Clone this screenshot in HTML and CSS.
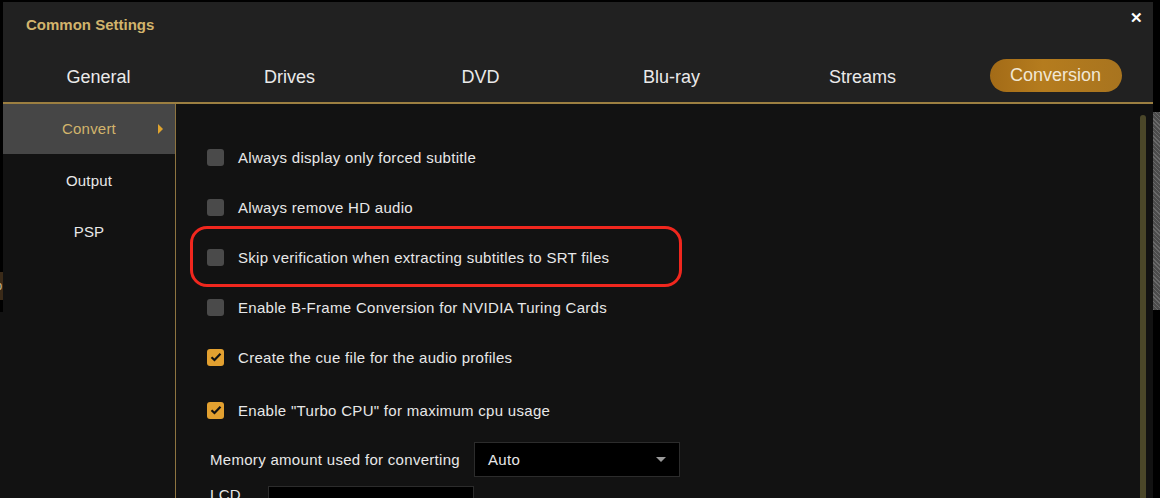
FILE: index.html
```html
<!DOCTYPE html>
<html lang="en">
<head>
    <meta charset="UTF-8">
    <title>Common Settings</title>
    <link rel="stylesheet" href="styles.css">
</head>
<body>
    <div class="edge-left"><span class="behind">p</span></div>

    <div class="dialog">
        <div class="header">
            <div class="titlebar">
                <p class="title">Common Settings</p>
                <span class="close">&#x2715;</span>
            </div>
            <div class="tabs">
                <div class="tab"><span>General</span></div>
                <div class="tab"><span>Drives</span></div>
                <div class="tab"><span>DVD</span></div>
                <div class="tab"><span>Blu-ray</span></div>
                <div class="tab"><span>Streams</span></div>
                <div class="tab"><span class="pill">Conversion</span></div>
            </div>
        </div>

        <div class="body">
            <div class="sidebar">
                <div class="side-item active">Convert<span class="arrow"></span></div>
                <div class="side-item">Output</div>
                <div class="side-item">PSP</div>
            </div>

            <div class="content">
                <div class="option">
                    <span class="check"></span>
                    <span>Always display only forced subtitle</span>
                </div>
                <div class="option">
                    <span class="check"></span>
                    <span>Always remove HD audio</span>
                </div>
                <div class="option">
                    <span class="check"></span>
                    <span>Skip verification when extracting subtitles to SRT files</span>
                </div>
                <div class="option">
                    <span class="check"></span>
                    <span>Enable B-Frame Conversion for NVIDIA Turing Cards</span>
                </div>
                <div class="option">
                    <span class="check on">
                        <svg width="12" height="10" viewBox="0 0 12 10"><path d="M1.5 5.2 L4.5 8 L10.5 1.8" fill="none" stroke="#111" stroke-width="2.2"/></svg>
                    </span>
                    <span>Create the cue file for the audio profiles</span>
                </div>
                <div class="option turbo">
                    <span class="check on">
                        <svg width="12" height="10" viewBox="0 0 12 10"><path d="M1.5 5.2 L4.5 8 L10.5 1.8" fill="none" stroke="#111" stroke-width="2.2"/></svg>
                    </span>
                    <span>Enable "Turbo CPU" for maximum cpu usage</span>
                </div>

                <div class="field">
                    <span class="field-label">Memory amount used for converting</span>
                    <div class="select">
                        <span>Auto</span>
                        <span class="caret"></span>
                    </div>
                </div>
                <div class="field lcd">
                    <span class="field-label short">LCD</span>
                    <div class="input">720</div>
                    <span class="unit">HD</span>
                </div>

                <div class="highlight"></div>
                <div class="scrollbar"></div>
            </div>
        </div>
    </div>

    <div class="edge-right"><div class="noise"></div></div>
</body>
</html>
```

FILE: styles.css
```css
body{
    margin:0;
    background-color:#000;
    font-family:"Liberation Sans", Arial, sans-serif;
    color:#e8e8e8;
    display:flex;
    height:498px;
    overflow:hidden;
}
.edge-left{
    width:3px;
    flex-shrink:0;
    background:linear-gradient(#000 312px, #121212 312px);
    overflow:hidden;
}
.behind{
    display:block;
    margin-top:272px;
    height:28px;
    background-color:#3a2a18;
    color:#c9b48a;
    font-size:13px;
    line-height:28px;
    text-indent:-5px;
}
.edge-right{
    width:7px;
    flex-shrink:0;
}
.noise{
    margin-top:112px;
    height:198px;
    background-color:#5a5a5a;
    background-image:repeating-linear-gradient(45deg, #6a6a6a 0 1px, #4c4c4c 1px 3px);
}

.dialog{
    width:1150px;
    flex-shrink:0;
    display:flex;
    flex-direction:column;
}

/* header */
.header{
    background-color:#212121;
    border-bottom:2px solid #9c7f41;
    margin-top:2px;
}
.titlebar{
    height:47px;
    display:flex;
    align-items:center;
    justify-content:space-between;
    padding:0 10px 0 23px;
}
.title{
    margin:0;
    font-size:15px;
    font-weight:bold;
    color:#d2b46c;
    margin-top:-3px;
}
.close{
    color:#fff;
    font-weight:bold;
    font-size:15px;
    margin-top:-16px;
}
.tabs{
    display:grid;
    grid-template-columns:repeat(6, 191px);
    height:53px;
    align-items:center;
    font-size:18px;
    color:#eaeaea;
}
.tab{
    text-align:center;
    margin-top:4px;
}
.pill{
    display:inline-block;
    width:132px;
    height:33px;
    line-height:33px;
    border-radius:17px;
    background:linear-gradient(90deg, #a36b17 0%, #b57c1e 40%, #a8741f 100%);
    color:#f1e7d4;
    margin-left:4px;
    margin-top:-4px;
}

/* body */
.body{
    flex:1;
    display:flex;
    background-color:#121212;
}
.sidebar{
    width:172px;
    border-right:1px solid #8e7440;
    font-size:15px;
    letter-spacing:0.2px;
}
.side-item{
    height:51px;
    line-height:53px;
    text-align:center;
    position:relative;
}
.side-item.active{
    height:50px;
    line-height:50px;
    background-color:#464646;
    color:#d2b46c;
}
.arrow{
    position:absolute;
    right:12px;
    top:20px;
    border-left:5px solid #e0a42e;
    border-top:5px solid transparent;
    border-bottom:5px solid transparent;
}

.content{
    flex:1;
    position:relative;
    padding:28px 0 0 31px;
    font-size:15px;
    letter-spacing:0.3px;
}
.option{
    height:50px;
    display:flex;
    align-items:center;
    gap:14px;
}
.option.turbo{
    margin-top:4px;
    height:48px;
}
.check{
    width:17px;
    height:17px;
    border-radius:3px;
    background-color:#4a4a4a;
    display:flex;
    align-items:center;
    justify-content:center;
}
.check.on{
    background-color:#e2a030;
}

.field{
    display:flex;
    align-items:center;
    gap:14px;
    padding-left:3px;
    height:49px;
    margin-top:1px;
}
.field-label.short{
    width:44px;
}
.select{
    height:33px;
    background-color:#000;
    border:1px solid #2c2c2c;
    display:flex;
    align-items:center;
    justify-content:space-between;
    padding:0 13px;
    width:178px;
}
.caret{
    border-top:5px solid #9a9a9a;
    border-left:5px solid transparent;
    border-right:5px solid transparent;
}
.lcd{
    align-items:flex-start;
    padding-top:2px;
    margin-top:0;
    gap:0;
}
.input{
    height:33px;
    background-color:#000;
    border:1px solid #2c2c2c;
    padding:8px 0 0 12px;
    box-sizing:border-box;
    width:206px;
    margin-left:14px;
}
.unit{
    margin-left:9px;
    padding-top:8px;
}

/* overlays */
.highlight{
    position:absolute;
    left:14px;
    top:122px;
    width:486px;
    height:55px;
    border:3px solid #f0271e;
    border-radius:17px;
}
.scrollbar{
    position:absolute;
    right:7px;
    top:11px;
    bottom:0;
    width:6px;
    border-radius:3px;
    background-color:#4b4729;
}
```
